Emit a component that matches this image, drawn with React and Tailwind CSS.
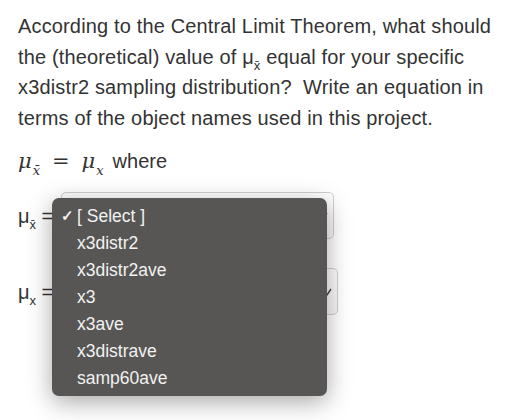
import React from "react";

const items = ["x3distr2", "x3distr2ave", "x3", "x3ave", "x3distrave", "samp60ave"];

function Chevron({ className }) {
  return (
    <svg className={className} width="12" height="10" viewBox="0 0 12 10">
      <path d="M2 2 L6 8 L10 2" stroke="#444" strokeWidth="1.4" fill="none" />
    </svg>
  );
}

export default function App() {
  return (
    <div className="relative w-[522px] h-[420px] bg-white overflow-hidden text-[#333333]" style={{ fontFamily: '"Liberation Sans", Arial, sans-serif' }}>
      <div className="pl-[18px] pr-[4px] pt-[11px]">
        <p className="text-[20px] leading-[30.5px] tracking-[0.15px] whitespace-nowrap">
          According to the Central Limit Theorem, what should
          <br />
          the (theoretical) value of μ<sub className="text-[13px] align-[-3px]">x̄</sub> equal for your specific
          <br />
          x3distr2 sampling distribution?&nbsp; Write an equation in
          <br />
          terms of the object names used in this project.
        </p>
        <div className="mt-[13px] flex items-baseline h-[30px]">
          <span className="italic text-[21px]" style={{ fontFamily: '"DejaVu Serif", "Liberation Serif", serif' }}>
            μ<sub className="text-[13px] align-[-4px] ml-[1px]">x̄</sub>
            <span className="not-italic mx-[12px]">=</span>
            μ<sub className="text-[13px] align-[-4px] ml-[1px]">x</sub>
          </span>
          <span className="ml-[9px] text-[20px]">where</span>
        </div>
        <div className="mt-[16px] flex items-center h-[47px]">
          <span className="text-[20px] w-[43px] whitespace-nowrap">μ<sub className="text-[13px] align-[-3px]">x̄</sub> =</span>
          <div className="relative w-[273px] h-[47px] rounded-[5px] border border-[#cfcfcf] bg-gradient-to-b from-white to-[#f6f6f6]">
            <Chevron className="absolute right-[4px] top-[18px]" />
          </div>
        </div>
        <div className="mt-[29px] flex items-center h-[47px]">
          <span className="text-[20px] w-[47px] whitespace-nowrap">μ<sub className="text-[13px] align-[-3px]">x</sub> =</span>
          <div className="relative w-[273px] h-[47px] rounded-[5px] border border-[#cfcfcf] bg-gradient-to-b from-white to-[#f6f6f6]">
            <Chevron className="absolute right-[4px] top-[18px]" />
          </div>
        </div>
      </div>
      <div className="absolute left-[52px] top-[198px] w-[275px] h-[198px] rounded-[7px] bg-[#575654] shadow-[0_6px_24px_rgba(0,0,0,0.35)] pt-[5px] text-[17.5px] text-[#f2f2f2]">
        <div className="flex items-center h-[27px]">
          <span className="w-[25px] pl-[9px] text-[15px] font-bold">✓</span>
          <span>[ Select ]</span>
        </div>
        {items.map((t) => (
          <div key={t} className="flex items-center h-[27px] pl-[25px]">
            {t}
          </div>
        ))}
      </div>
    </div>
  );
}
